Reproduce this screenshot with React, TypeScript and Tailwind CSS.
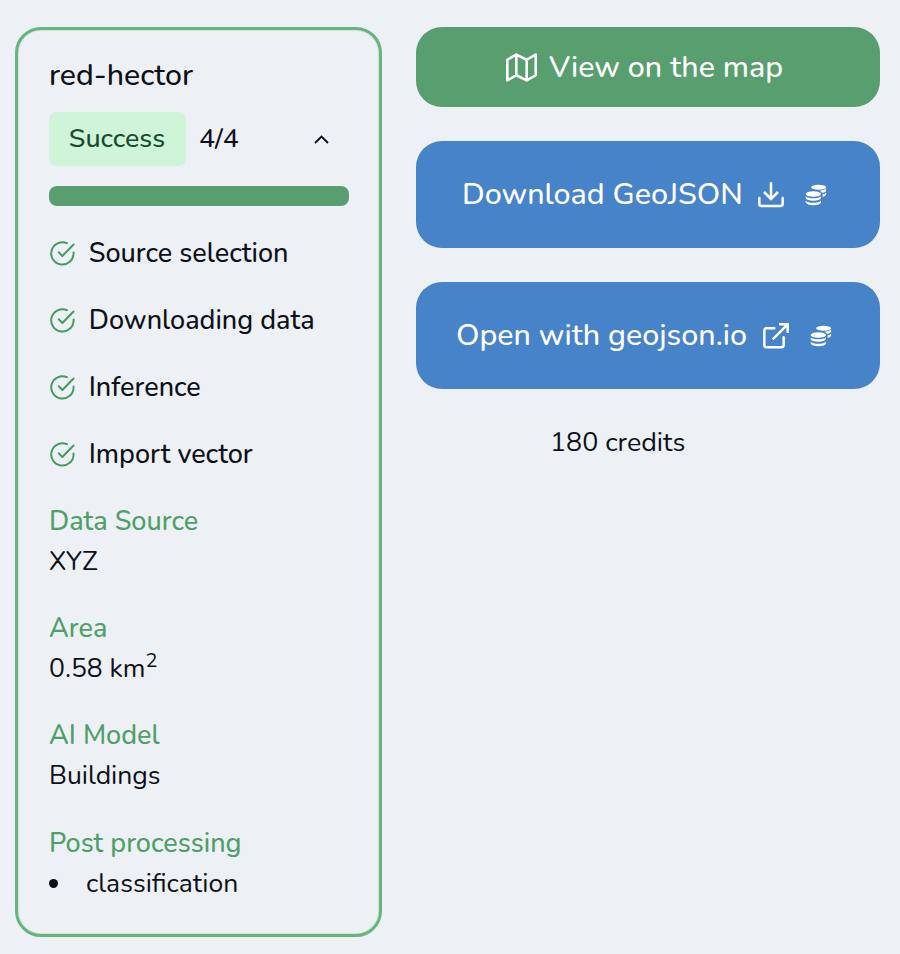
import type { ReactNode } from "react";

const steps = ["Source selection", "Downloading data", "Inference", "Import vector"];

function CheckIcon() {
  return (
    <svg className="size-[26.8px] shrink-0" viewBox="0 0 24 24" fill="none" stroke="#459a5f" strokeWidth="1.75" strokeLinecap="round" strokeLinejoin="round">
      <path d="M22 11.08V12a10 10 0 1 1-5.93-9.14" />
      <path d="M22 4 12 14.300l-3.300-3.300" />
    </svg>
  );
}

function MapIcon() {
  return (
    <svg className="h-[31px] w-[31px] shrink-0" viewBox="0 0 24 24" fill="none" stroke="currentColor" strokeWidth="2" strokeLinecap="round" strokeLinejoin="round">
      <path d="M1 6v16l7-4 8 4 7-4V2l-7 4-8-4-7 4ZM8 2v16M16 6v16" />
    </svg>
  );
}

function DownloadIcon() {
  return (
    <svg className="h-[26px] w-[26px] shrink-0" viewBox="0 0 78 78" fill="none" stroke="currentColor" strokeWidth="7.5">
      <path d="M4 48v17q0 7 7 7h56q7 0 7-7V48" strokeLinecap="round" />
      <path d="M39 1v50M18 30 39 51l21-21" />
    </svg>
  );
}

function ExternalIcon() {
  return (
    <svg className="h-[26px] w-[26px] shrink-0" viewBox="0 0 78 78" fill="none" stroke="currentColor" strokeWidth="7.500">
      <path d="M34 16H11q-7 0-7 7v43q0 7 7 7h44q7 0 7-7V43" strokeLinecap="round" />
      <path d="M48 4h26v26M74 4 29 49" />
    </svg>
  );
}

function CoinsIcon() {
  return (
    <svg className="h-[22px] w-[22px] shrink-0" viewBox="0 0 66 66" fill="currentColor">
      <ellipse cx="41" cy="9.500" rx="22.500" ry="7.500" />
      <path d="M44 20.500q13-1 19.500-6v4q0 6-12.500 8-3-4-7-6ZM53 31.500q7-1 10.500-5v4q0 5-10.500 8Z" />
      <ellipse cx="25" cy="30" rx="23" ry="8.500" />
      <path d="M2 37q7 6 23 6t23-6v5q-3 8-23 8T2 42ZM2 50q7 6 23 6t23-6v5q-3 9-23 9T2 55Z" />
    </svg>
  );
}

function Field({ label, children }: { label: string; children: ReactNode }) {
  return (
    <div className="text-[26.5px] leading-[40.200px]">
      <div className="h-[40.200px] pt-px text-[27px] font-medium text-[#4f9f68]">{label}</div>
      <div className="h-[40.200px]">{children}</div>
    </div>
  );
}

export default function App() {
  return (
    <main className="flex h-[954px] w-[900px] items-start gap-[34px] overflow-hidden bg-[#edf1f6] pt-[27px] pl-[15px] font-['Nunito','Lato',sans-serif] text-[#0d1019]">
      <section className="h-[910px] w-[367px] shrink-0 rounded-[26px] border-[3px] border-[#65b57c] px-[31px] pt-[25px] shadow-[inset_0_0_1px_0.5px_#b5dac2]">
        <h1 className="h-[57px] text-[30.300px] leading-[40px] font-medium">red-hector</h1>
        <div className="flex h-[54px] items-center">
          <span className="flex h-[54px] w-[137px] items-center justify-center rounded-[7px] bg-[#cff4d8] pr-px pb-[2px] text-[26.8px] font-medium text-[#164b30]">Success</span>
          <span className="ml-[13px] pb-[2px] text-[26.8px] font-medium">4/4</span>
          <svg className="mr-[19px] ml-auto h-[9px] w-[15px]" viewBox="0 0 15 9" fill="none" stroke="#0d1019" strokeWidth="1.900">
            <path d="M1 8 7.500 1.500 14 8" />
          </svg>
        </div>
        <div className="mt-[20px] -mr-[0.5px] h-[20px] rounded-[8px] bg-[#589e6e]" />
        <ul className="mt-[27px] flex flex-col gap-[27px]">
          {steps.map((label) => (
            <li key={label} className="-ml-[0.5px] flex h-[40px] items-center gap-[13.500px] text-[27px] font-medium">
              <CheckIcon />
              <span className="pt-[3px]">{label}</span>
            </li>
          ))}
        </ul>
        <div className="mt-[26.5px] flex flex-col gap-[27px]">
          <Field label="Data Source">XYZ</Field>
          <Field label="Area">
            0.58 km<sup className="-top-[0.5em] text-[20px] leading-none">2</sup>
          </Field>
          <Field label="AI Model">Buildings</Field>
          <Field label="Post processing">
            <div className="flex items-center gap-[28px]">
              <span className="mt-[2px] size-[9px] rounded-full bg-[#0d1019]" />
              <span>classification</span>
            </div>
          </Field>
        </div>
      </section>
      <section className="flex w-[464px] flex-col gap-[34px] text-[30.400px] leading-[40px] font-medium text-white">
        <button className="flex h-[80px] items-center justify-center gap-[12px] rounded-[26px] bg-[#589e6e] pr-[7px]">
          <MapIcon />
          <span className="pb-px">View on the map</span>
        </button>
        <button className="flex h-[107px] items-center rounded-[26px] bg-[#4783c9] pl-[46px]">
          <span className="w-[296px] pb-px text-left whitespace-nowrap">Download GeoJSON</span>
          <DownloadIcon />
          <span className="ml-[21px]"><CoinsIcon /></span>
        </button>
        <button className="flex h-[107px] items-center rounded-[26px] bg-[#4783c9] pl-[41px]">
          <span className="-ml-px w-[307px] pb-px text-left whitespace-nowrap">Open with geojson.io</span>
          <ExternalIcon />
          <span className="ml-[21px]"><CoinsIcon /></span>
        </button>
        <p className="-mt-px pl-[134px] text-[26.8px] font-normal text-[#0d1019]">180 credits</p>
      </section>
    </main>
  );
}
